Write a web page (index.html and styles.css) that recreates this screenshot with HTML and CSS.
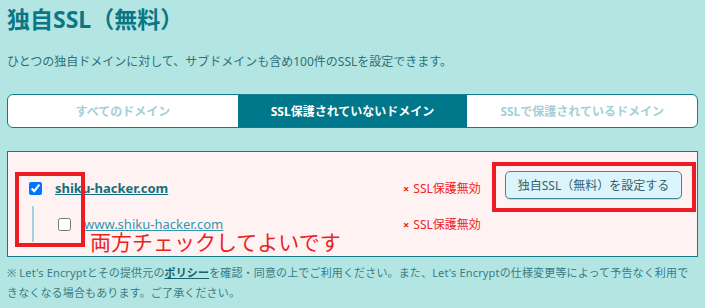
FILE: index.html
```html
<!DOCTYPE html>
<html lang="ja">

<head>
    <meta charset="UTF-8">
    <meta name="viewport" content="width=device-width, initial-scale=1.0">
    <link rel="stylesheet" href="styles.css">
    <title>独自SSL（無料）</title>
</head>

<body>

    <main class="container">

        <h1 class="page-title">独自SSL（無料）</h1>
        <p class="lead">ひとつの独自ドメインに対して、サブドメインも含め100件のSSLを設定できます。</p>

        <div class="tabs">
            <a href="#" class="tab">すべてのドメイン</a>
            <a href="#" class="tab active">SSL保護されていないドメイン</a>
            <a href="#" class="tab">SSLで保護されているドメイン</a>
        </div>

        <form class="panel" action="#">
            <div class="domain-list">
                <div class="domain-row">
                    <label class="domain-name">
                        <input type="checkbox" checked>
                        <a href="#" class="domain-link main">shiku-hacker.com</a>
                    </label>
                    <span class="status"><span class="cross">×</span>SSL保護無効</span>
                </div>
                <div class="domain-row">
                    <label class="domain-name sub">
                        <input type="checkbox">
                        <a href="#" class="domain-link">www.shiku-hacker.com</a>
                    </label>
                    <span class="status"><span class="cross">×</span>SSL保護無効</span>
                </div>
            </div>

            <button type="submit" class="btn-ssl">独自SSL（無料）を設定する</button>

            <!-- annotations -->
            <div class="mark mark-check"></div>
            <div class="mark mark-button"></div>
            <p class="note">両方チェックしてよいです</p>
        </form>

        <p class="footnote">※ Let's Encryptとその提供元の<a href="#">ポリシー</a>を確認・同意の上でご利用ください。また、Let's Encryptの仕様変更等によって予告なく利用できなくなる場合もあります。ご了承ください。</p>

    </main>

</body>

</html>
```

FILE: styles.css
```css
*{
    padding: 0;
    margin: 0;
    box-sizing: border-box;
}
html{
    font-family: "Noto Sans", "Noto Sans CJK JP", sans-serif;
}
body{
    background: #b3e6e3;
    color: #2f6f79;
}

main.container{
    padding: 4px 7px 0 8px;
    width: 705px;
}

.page-title{
    font-size: 23px;
    line-height: 30px;
    font-weight: 700;
    color: #0b7686;
    margin-left: -1px;
}

.lead{
    margin-top: 19px;
    font-size: 12px;
    line-height: 18px;
    margin-left: -1px;
}

/* tabs */
.tabs{
    display: flex;
    margin: 23px 0 0 -1px;
    height: 34px;
    border: 1px solid #157b89;
    border-radius: 6px;
    background: #fff;
    overflow: hidden;
}
.tab{
    flex: 1;
    display: flex;
    align-items: center;
    justify-content: center;
    font-size: 12px;
    font-weight: 700;
    color: #a3d0d8;
    text-decoration: none;
}
.tab.active{
    background: #00778a;
    color: #fff;
}

/* domain panel */
.panel{
    position: relative;
    display: flex;
    align-items: flex-start;
    margin: 23px 0 0 -1px;
    padding: 18px 15px 14px 21px;
    background: #fff2f2;
    border: 1px solid #157b89;
}
.domain-list{
    flex: 1;
}
.domain-row{
    display: flex;
    align-items: center;
    height: 36px;
}
.domain-name{
    flex: 1;
    display: flex;
    align-items: center;
    gap: 13px;
    height: 100%;
}
.domain-name.sub{
    margin-left: 3px;
    border-left: 2px solid #9fd3df;
    padding-left: 24px;
}
.domain-name input{
    margin: 0;
    width: 13px;
    height: 13px;
}
.domain-link{
    font-size: 13px;
    color: #3297ad;
}
.domain-link.main{
    font-weight: 700;
    color: #13707f;
}
.status{
    width: 90px;
    font-size: 12px;
    color: #f0231f;
}
.cross{
    font-weight: 700;
    font-size: 11px;
    margin-right: 4px;
}

.btn-ssl{
    margin: 1px 0 0 12px;
    width: 177px;
    height: 28px;
    font-family: inherit;
    font-size: 12px;
    color: #35626a;
    background: #dcf4fb;
    border: 1px solid #3f8a96;
    border-radius: 5px;
    box-shadow: 0 1px 1px rgba(0, 0, 0, .15);
}

/* red annotations */
.mark{
    position: absolute;
    border: 4px solid #ec1c24;
}
.mark-check{
    left: 7px;
    top: 20px;
    width: 70px;
    height: 75px;
}
.mark-button{
    left: 484px;
    top: 10px;
    width: 204px;
    height: 50px;
}
.note{
    position: absolute;
    left: 82px;
    top: 78px;
    font-size: 21px;
    line-height: 22px;
    font-family: "Noto Sans CJK JP", sans-serif;
    font-weight: 400;
    color: #e8241f;
}

.footnote{
    margin: 6px 0 0 -1px;
    font-size: 11px;
    line-height: 20px;
    letter-spacing: .15px;
    color: #3a7b85;
}
.footnote a{
    color: #13616d;
    font-weight: 700;
}
```
